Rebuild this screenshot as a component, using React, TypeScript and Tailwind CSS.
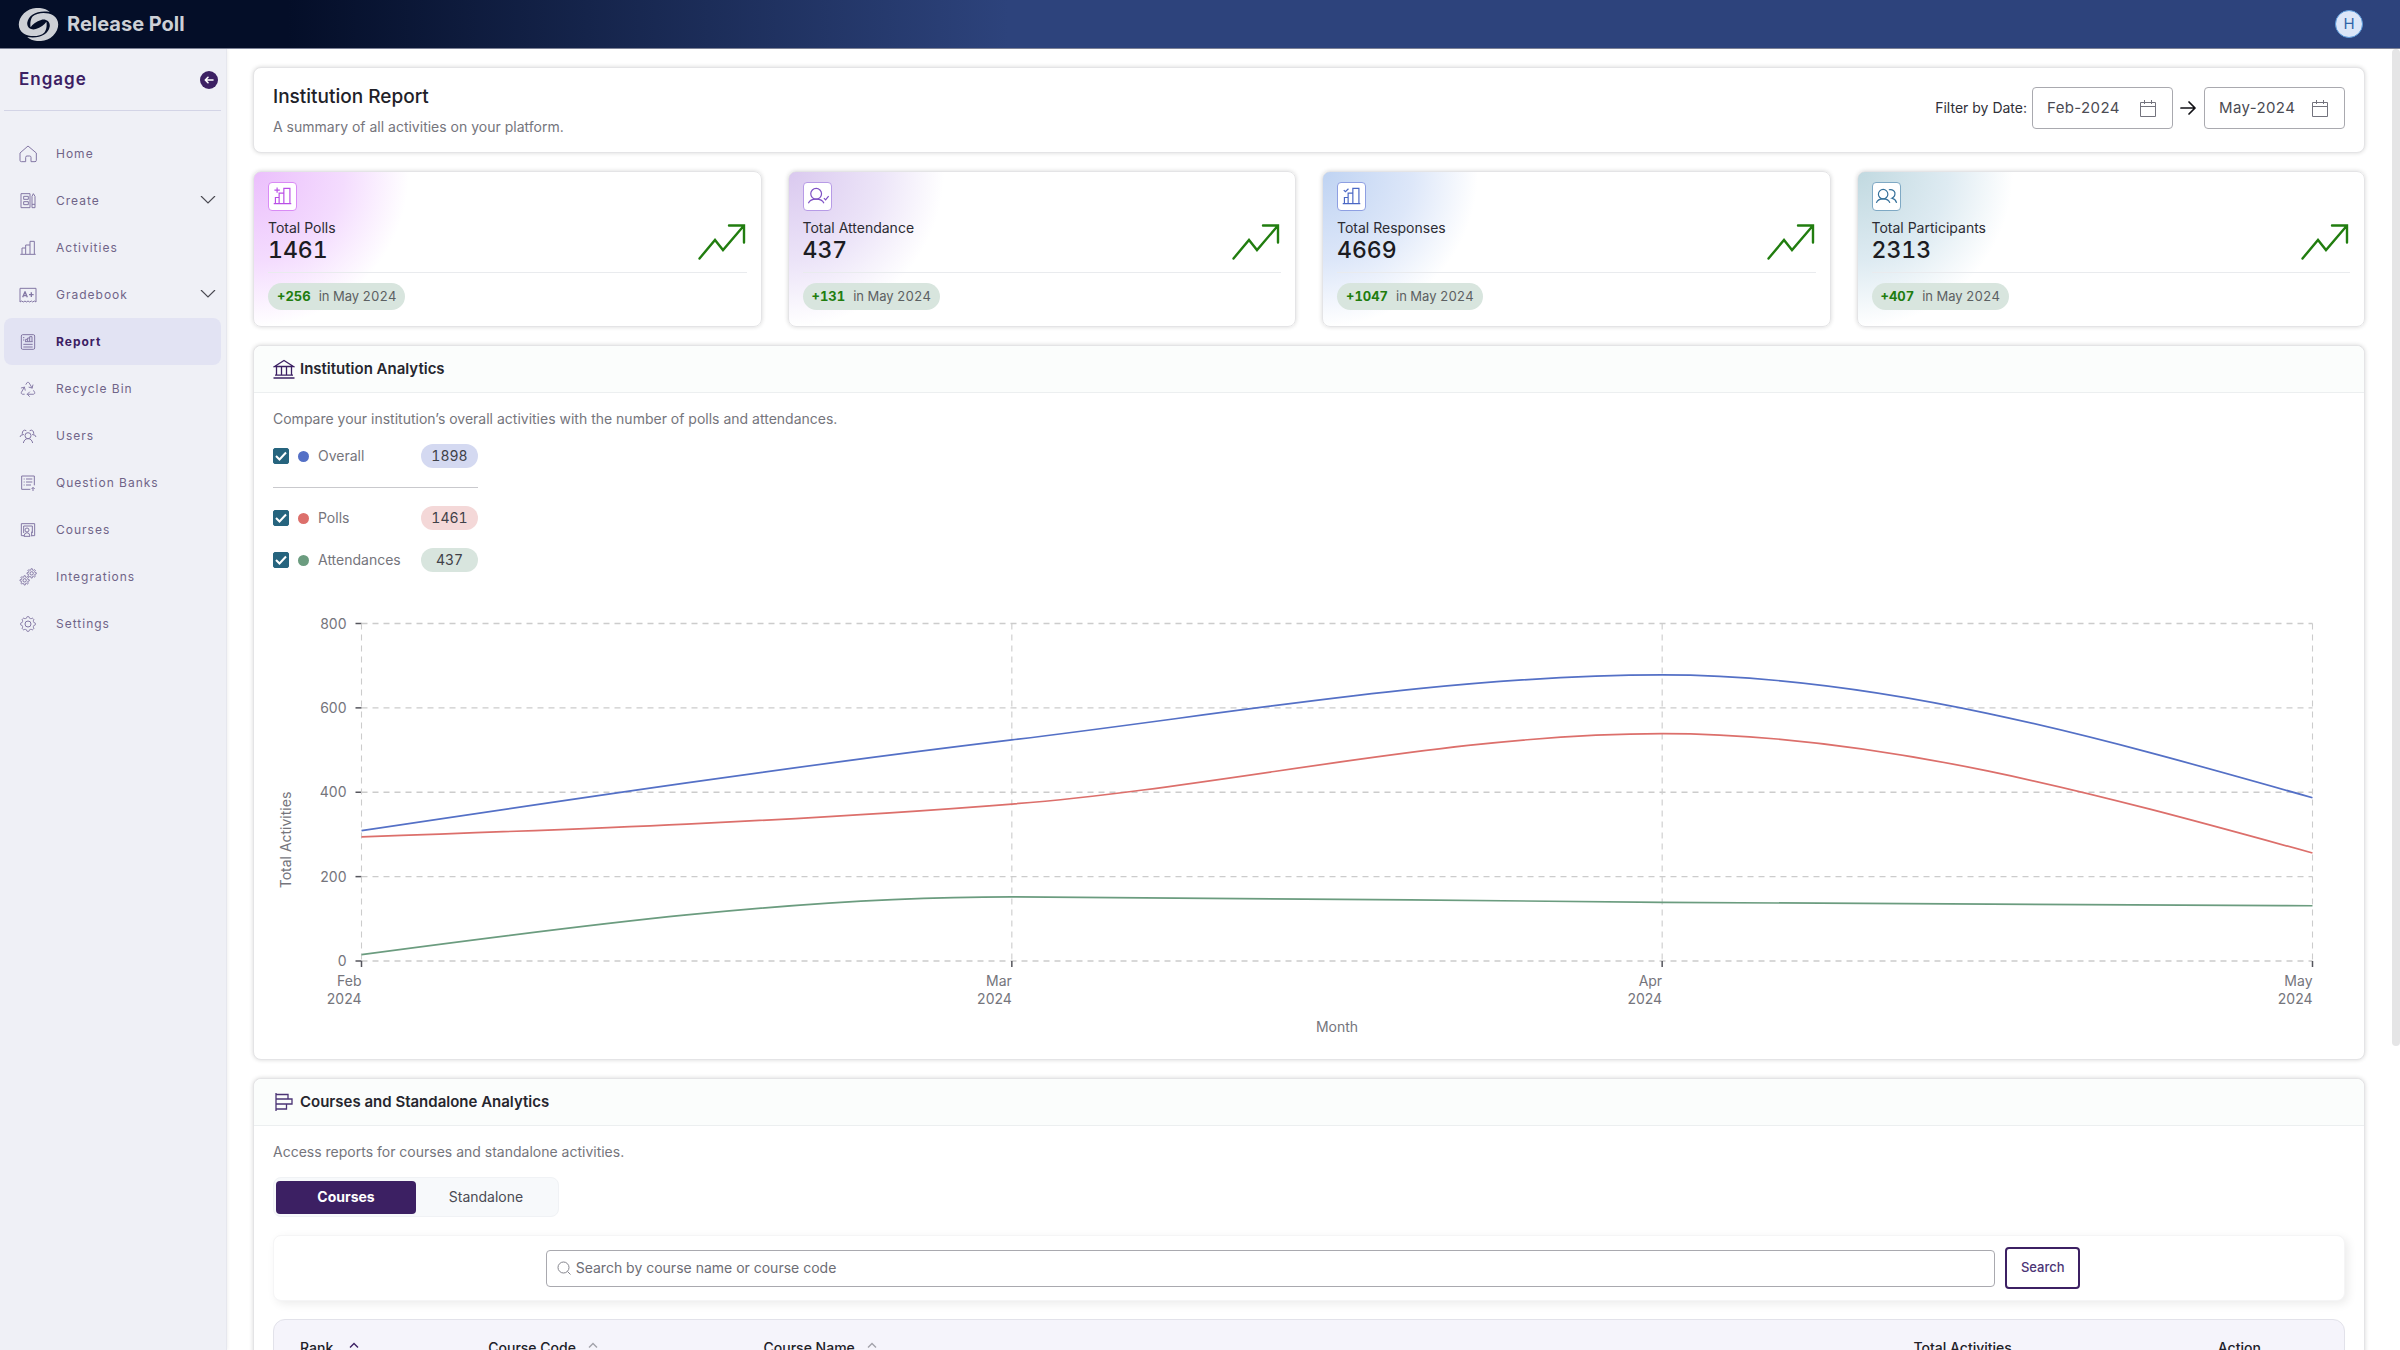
import { useLayoutEffect, useRef, useState } from "react";
import type { ReactNode } from "react";
import { Recycle } from "lucide-react";

const MONTHS = ["Feb", "Mar", "Apr", "May"];

const SERIES = [
  { id: "overall", label: "Overall", total: 1898, color: "#5470c6", dot: "bg-[#5470c6]", pill: "bg-[#d4d9f1]", values: [309, 524, 678, 387] },
  { id: "polls", label: "Polls", total: 1461, color: "#dc6f6b", dot: "bg-[#dc6f6b]", pill: "bg-[#f4d8d8]", values: [294, 372, 539, 256] },
  { id: "attendances", label: "Attendances", total: 437, color: "#6b9c7f", dot: "bg-[#6b9c7f]", pill: "bg-[#d8e5de]", values: [15, 152, 139, 131] },
];

const CARD = "rounded-lg border border-[#e4e4e6] bg-white shadow-[0_0_4px_rgba(0,0,0,0.16)]";

function gearPath(cx: number, cy: number, r: number, depth: number, teeth = 8) {
  const points: string[] = [];
  for (let i = 0; i < 96; i++) {
    const a = (i / 96) * Math.PI * 2;
    const wave = Math.max(-0.7, Math.min(0.7, Math.cos(a * teeth) * 1.3));
    const rr = r + depth * wave;
    points.push(`${(cx + rr * Math.cos(a)).toFixed(2)} ${(cy + rr * Math.sin(a)).toFixed(2)}`);
  }
  return `M${points.join("L")}Z`;
}

function NavIcon({ children }: { children: ReactNode }) {
  return (
    <svg viewBox="0 0 54 54" className="size-[18px]" fill="none" stroke="currentColor" strokeWidth="3" strokeLinejoin="round" aria-hidden="true">
      {children}
    </svg>
  );
}

const NAV = [
  { label: "Home", icon: <NavIcon><path d="M3 46V24L27 3l25 21v22q0 4-4 4H36V37q0-4-4-4h-8q-4 0-4 4v13H7q-4 0-4-4Z" /></NavIcon> },
  {
    label: "Create",
    expandable: true,
    icon: <NavIcon><path d="M33 30v17H6V5h27v25M14 13h14v9H14ZM14 29h14v9H14ZM39 13l4-8 5 8v34h-9ZM39 37h9" /></NavIcon>,
  },
  { label: "Activities", icon: <NavIcon><path d="M4 46h46M9 45V27h11v18M20 27v-9h13v27M33 18V7h13v38" /></NavIcon> },
  {
    label: "Gradebook",
    expandable: true,
    icon: (
      <NavIcon>
        <path d="M3 7h48v41l-5-3-5 3-4-3-5 3-5-3-5 3-4-3-5 3-5-3-5 3Z" />
        <path d="M11 34l7-17 7 17M14 29h9M30 26h14M37 19v14" strokeWidth="4" />
      </NavIcon>
    ),
  },
  {
    label: "Report",
    active: true,
    icon: <NavIcon><rect x="7" y="5" width="40" height="44" rx="4" /><path d="M20 26v-7h6v7M26 19v-4h6v11M32 15v-4h7v15M18 26h23M12 14h4M12 21h4M13 34h28M13 42h28" /></NavIcon>,
  },
  { label: "Recycle Bin", icon: <Recycle className="size-[18px]" strokeWidth={1.25} aria-hidden="true" /> },
  {
    label: "Users",
    icon: <NavIcon><circle cx="27" cy="26" r="9" /><path d="M13 48q3-13 14-13t14 13M14 24Q7 20 11 13q5-6 11-2M3 30q2-8 10-7M40 24q7-4 3-11-5-6-11-2M51 30q-2-8-10-7" /></NavIcon>,
  },
  {
    label: "Question Banks",
    icon: <NavIcon><path d="M46 34V6H8v40h26M14 15h3M14 24h3M14 33h3M21 15h19M21 24h19M21 33h15M42 51V41M38 45l4-5 5 5" /></NavIcon>,
  },
  {
    label: "Courses",
    icon: <NavIcon><path d="M15 44H7V8h40v36h-9M14 36V15h26v21" /><circle cx="24" cy="27" r="6" /><path d="M15 46q1-11 9-11t9 11ZM38 32v14" /></NavIcon>,
  },
  {
    label: "Integrations",
    icon: <NavIcon><path d={gearPath(17, 37, 12, 3)} /><circle cx="17" cy="37" r="5" /><path d={gearPath(38, 16, 12, 3)} /><circle cx="38" cy="16" r="5" /></NavIcon>,
  },
  { label: "Settings", icon: <NavIcon><path d={gearPath(27, 27, 20, 3)} /><circle cx="27" cy="27" r="9" /></NavIcon> },
];

const STATS = [
  {
    label: "Total Polls",
    value: "1461",
    change: "+256",
    glow: "bg-[radial-gradient(circle_at_top_left,#ebbffc_0,#f4dcfe_90px,#ffffff_155px)]",
    tint: "border-[#d98bf5] text-[#b94fe6]",
    icon: <path d="M17 64h52M22 64V46h11v18M33 46V33h14v31M47 33V19h18v45M27 16v16M19 24h16" />,
  },
  {
    label: "Total Attendance",
    value: "437",
    change: "+131",
    glow: "bg-[radial-gradient(circle_at_top_left,#dac9ef_0,#ece4f8_90px,#ffffff_155px)]",
    tint: "border-[#b79be6] text-[#7d4fc4]",
    icon: <><circle cx="39" cy="35" r="16" /><path d="M16 63q5-12 23-12t23 12M62 48l5 5 9-11" /></>,
  },
  {
    label: "Total Responses",
    value: "4669",
    change: "+1047",
    glow: "bg-[radial-gradient(circle_at_top_left,#bfd3f2_0,#dde7f9_90px,#ffffff_155px)]",
    tint: "border-[#8e9fe2] text-[#4a67c4]",
    icon: <path d="M17 64h52M22 64V46h11v18M33 46V33h14v31M47 33V19h18v45M20 24l5 5 9-9" />,
  },
  {
    label: "Total Participants",
    value: "2313",
    change: "+407",
    glow: "bg-[radial-gradient(circle_at_top_left,#c1d9e0_0,#deebf2_90px,#ffffff_155px)]",
    tint: "border-[#7fa9c4] text-[#35709a]",
    icon: <><circle cx="33" cy="36" r="14" /><path d="M13 62q4-12 20-12t20 12M50 23q14-3 18 9 1 12-9 16 11 3 14 14" /></>,
  },
];

function Logo() {
  return (
    <svg viewBox="0 0 124 100" className="h-[33px] w-[41px]" fill="#cdd0d6" aria-hidden="true">
      <path d="M96 12C80-4 40-6 18 16-4 38-2 66 18 78c16 10 48 10 62-4 6-8 8-20 6-32-6 10-18 18-32 22-14 4-28-4-26-20C32 20 60 6 96 12Z" />
      <path d="M28 88c16 16 56 18 78-4 22-22 20-50 0-62-16-10-48-10-62 4-6 8-8 20-6 32 6-10 18-18 32-22 14-4 28 4 26 20-4 24-32 38-68 32Z" />
    </svg>
  );
}

function Header() {
  return (
    <header className="flex h-[49px] shrink-0 items-center justify-between border-b border-[#7d8296] bg-[linear-gradient(90deg,#040e28_12%,#2d437c_42%)] pr-[37px] pl-[18px]">
      <a href="#" className="flex items-center gap-2 text-xl font-bold text-[#cdd0d6]">
        <Logo />
        Release Poll
      </a>
      <button className="flex size-7 items-center justify-center rounded-full border border-[#5a9bdc] bg-[#dce6f8] text-[15px] text-[#2f64a8]">
        H
      </button>
    </header>
  );
}

function Sidebar() {
  return (
    <aside className="w-[227px] shrink-0 border-r border-[#e6e7ee] bg-[#eff0f6] pr-[5px] pl-1 shadow-[1px_0_3px_rgba(0,0,0,0.06)]">
      <div className="flex h-[62px] items-center justify-between border-b border-[#d3d4e6] pr-[3px] pl-[15px]">
        <h2 className="text-[17px] font-semibold tracking-[1px] text-[#3c2063]">Engage</h2>
        <button aria-label="Collapse menu" className="flex size-[18px] items-center justify-center rounded-full bg-[#3c2063] text-white">
          <svg viewBox="0 0 18 18" className="size-[18px]" fill="none" stroke="currentColor" strokeWidth="1.6" strokeLinecap="round" strokeLinejoin="round">
            <path d="M13 9H5.500M8 6.300L5.300 9 8 11.700" />
          </svg>
        </button>
      </div>
      <nav className="mt-[19px] flex flex-col">
        {NAV.map((item) => (
          <a
            key={item.label}
            href="#"
            className={`flex h-[47px] items-center gap-[19px] rounded-lg pr-[5px] pl-[15px] text-xs tracking-[1px] ${
              item.active ? "bg-[#e2e3f3] font-bold text-[#3c2063]" : "text-[#706488]"
            }`}
          >
            <span className="text-[#8377a4]">{item.icon}</span>
            <span className="flex-1">{item.label}</span>
            {item.expandable && (
              <svg viewBox="0 0 16 9" className="h-[9px] w-4" fill="none" stroke="#4a4a52" strokeWidth="1.2" aria-hidden="true">
                <path d="M1 0l7 7 7-7" />
              </svg>
            )}
          </a>
        ))}
      </nav>
    </aside>
  );
}

function MonthField({ id, label, value }: { id: string; label: string; value: string }) {
  return (
    <div className="flex h-[42px] w-[141px] items-center rounded border border-[#a9a9af] pr-4 pl-3.5">
      <input
        id={id}
        aria-label={label}
        defaultValue={value}
        className="w-0 flex-1 bg-transparent text-[15px] tracking-wide text-[#4b4b53] outline-none"
      />
      <svg viewBox="0 0 16 17" className="h-[17px] w-4" fill="none" stroke="#73737d" aria-hidden="true">
        <path d="M.500 2.500h15v14H.500ZM.500 6.500h15M4.500 0v4M11.500 0v4" />
      </svg>
    </div>
  );
}

function ReportHeader() {
  return (
    <section className={`${CARD} flex items-start justify-between px-[19px] pt-[15px] pb-[15px]`}>
      <div>
        <h1 className="text-[19px] leading-7 font-medium text-[#212128]">Institution Report</h1>
        <p className="mt-1.5 text-sm text-[#75757c]">A summary of all activities on your platform.</p>
      </div>
      <div className="flex items-center gap-[5px] pt-1">
        <label htmlFor="from" className="text-sm text-[#303038]">Filter by Date:</label>
        <MonthField id="from" label="From month" value="Feb-2024" />
        <svg viewBox="0 0 21 16" className="h-4 w-[21px]" fill="none" stroke="#111116" strokeWidth="1.7" strokeLinecap="round" strokeLinejoin="round" aria-hidden="true">
          <path d="M3 8h14M11 2l6 6-6 6" />
        </svg>
        <MonthField id="to" label="To month" value="May-2024" />
      </div>
    </section>
  );
}

function StatCard({ stat }: { stat: (typeof STATS)[number] }) {
  return (
    <section className={`rounded-lg border border-[#e4e4e6] px-3.5 pt-2.5 pb-4 shadow-[0_0_4px_rgba(0,0,0,0.16)] ${stat.glow}`}>
      <div className="flex items-end justify-between border-b border-[#e9ebee] pb-[9px]">
        <div>
          <div className={`flex size-[29px] items-center justify-center rounded border bg-white ${stat.tint}`}>
            <svg viewBox="0 0 86 86" className="size-[29px] shrink-0" fill="none" stroke="currentColor" strokeWidth="3.500" aria-hidden="true">
              {stat.icon}
            </svg>
          </div>
          <h3 className="mt-[7px] text-sm text-[#2c2c33]">{stat.label}</h3>
          <p className="text-[23px] leading-[25px] font-medium text-[#1c1c22] tabular-nums">{stat.value}</p>
        </div>
        <svg viewBox="0 0 48 37" className="mr-px mb-[3px] h-[37px] w-12" fill="none" stroke="#217d0f" strokeWidth="2.400" strokeLinecap="round" aria-hidden="true">
          <path d="M1.500 35.500L17 17l8 10L46 2.500M31 2.500h15v17" />
        </svg>
      </div>
      <p className="mt-2.5 flex h-[27px] w-fit items-center gap-2 rounded-full bg-[#d8e5de] px-[9px] text-[13px] text-[#5c6062] tabular-nums">
        <strong className="font-bold text-[#217d0f]">{stat.change}</strong>
        in May 2024
      </p>
    </section>
  );
}

// Cubic path through the points that never overshoots them.
function monotonePath(points: [number, number][]) {
  const n = points.length;
  const slopes = points.slice(1).map(([x, y], i) => (y - points[i][1]) / (x - points[i][0]));
  const tangents = points.map((_, i) => {
    if (i === 0 || i === n - 1) return 0;
    const a = slopes[i - 1];
    const b = slopes[i];
    if (a * b <= 0) return 0;
    return Math.sign(a) * Math.min(Math.abs(a), Math.abs(b), Math.abs(a + b) / 4) * 2;
  });
  tangents[0] = (3 * slopes[0] - tangents[1]) / 2;
  tangents[n - 1] = (3 * slopes[n - 2] - tangents[n - 2]) / 2;

  let d = `M${points[0][0]} ${points[0][1]}`;
  for (let i = 1; i < n; i++) {
    const [x0, y0] = points[i - 1];
    const [x1, y1] = points[i];
    const dx = (x1 - x0) / 3;
    d += `C${x0 + dx} ${y0 + dx * tangents[i - 1]} ${x1 - dx} ${y1 - dx * tangents[i]} ${x1} ${y1}`;
  }
  return d;
}

function ActivityChart({ visible }: { visible: Record<string, boolean> }) {
  const ref = useRef<HTMLDivElement>(null);
  const [width, setWidth] = useState(2072);

  useLayoutEffect(() => {
    const el = ref.current;
    if (!el) return;
    const update = () => setWidth(el.clientWidth);
    update();
    const observer = new ResizeObserver(update);
    observer.observe(el);
    return () => observer.disconnect();
  }, []);

  const left = 88.5;
  const right = width - 32.5;
  const top = 23.5;
  const bottom = 361;
  const xAt = (i: number) => left + ((right - left) * i) / (MONTHS.length - 1);
  const yAt = (v: number) => bottom - ((bottom - top) * v) / 800;

  return (
    <div ref={ref} className="mt-7">
      <svg width={width} height="440" className="block text-sm" fill="#75757c">
        {[0, 200, 400, 600, 800].map((v) => (
          <g key={v}>
            <line x1={left} x2={right} y1={yAt(v)} y2={yAt(v)} stroke="#cccccc" strokeWidth="1.300" strokeDasharray="6 5" />
            <line x1={left - 6} x2={left} y1={yAt(v)} y2={yAt(v)} stroke="#55555c" strokeWidth="1.500" />
            <text x={left - 15} y={yAt(v) + 5} textAnchor="end">{v}</text>
          </g>
        ))}
        {MONTHS.map((month, i) => (
          <g key={month}>
            <line x1={xAt(i)} x2={xAt(i)} y1={top} y2={bottom} stroke="#cccccc" strokeWidth="1.100" strokeDasharray="6 5" />
            <line x1={xAt(i)} x2={xAt(i)} y1={bottom} y2={bottom + 6} stroke="#55555c" strokeWidth="1.500" />
            <text x={xAt(i)} y="386" textAnchor="end">{month}</text>
            <text x={xAt(i)} y="404" textAnchor="end">2024</text>
          </g>
        ))}
        {SERIES.filter((s) => visible[s.id]).map((s) => (
          <path
            key={s.id}
            d={monotonePath(s.values.map((v, i) => [xAt(i), yAt(v)]))}
            fill="none"
            stroke={s.color}
            strokeWidth="1.700"
          />
        ))}
        <text transform="translate(18 240) rotate(-90)" textAnchor="middle">Total Activities</text>
        <text x={(left + right) / 2} y="432" textAnchor="middle">Month</text>
      </svg>
    </div>
  );
}

function SectionTitle({ icon, children }: { icon: ReactNode; children: ReactNode }) {
  return (
    <div className="flex h-[47px] items-center gap-[5px] rounded-t-lg border-b border-[#eceff0] bg-[#fbfdfc] px-[19px]">
      {icon}
      <h2 className="text-[15px] font-semibold text-[#26262e]">{children}</h2>
    </div>
  );
}

function InstitutionAnalytics() {
  const [visible, setVisible] = useState<Record<string, boolean>>({ overall: true, polls: true, attendances: true });

  return (
    <section className={CARD}>
      <SectionTitle
        icon={
          <svg viewBox="0 0 22 20" className="h-5 w-[22px]" fill="none" stroke="#3c2063" strokeWidth="1.300" aria-hidden="true">
            <path d="M1.500 7.500L11 1.500l9.500 6ZM3.500 8v8M8.500 8v8M13.500 8v8M18.500 8v8M2 16.200h18M.500 19h21" />
          </svg>
        }
      >
        Institution Analytics
      </SectionTitle>
      <div className="px-[19px] pt-4 pb-[19px]">
        <p className="text-sm text-[#75757c]">
          Compare your institution’s overall activities with the number of polls and attendances.
        </p>
        <div className="mt-[15px] flex w-[205px] flex-col gap-[18px]">
          {SERIES.map((s) => (
            <div
              key={s.id}
              className={`flex items-center ${s.id === "overall" ? "border-b border-[#c9c9cd] pb-[19px]" : ""}`}
            >
              <span className="relative flex">
                <input
                  id={s.id}
                  type="checkbox"
                  checked={visible[s.id]}
                  onChange={(e) => setVisible((prev) => ({ ...prev, [s.id]: e.target.checked }))}
                  className="peer size-4 appearance-none rounded-xs border border-[#26647e] checked:bg-[#26647e]"
                />
                <svg viewBox="0 0 16 16" className="pointer-events-none absolute inset-0 hidden size-4 peer-checked:block" fill="none" stroke="#ffffff" strokeWidth="2" aria-hidden="true">
                  <path d="M3 8l3.500 3.500L13 4.500" />
                </svg>
              </span>
              <span className={`ml-[9px] size-[11px] rounded-full ${s.dot}`} />
              <label htmlFor={s.id} className="ml-[9px] flex-1 text-sm text-[#75757c]">{s.label}</label>
              <span className={`flex h-6 w-[57px] items-center justify-center rounded-full text-sm text-[#3f4148] tabular-nums ${s.pill}`}>
                {s.total}
              </span>
            </div>
          ))}
        </div>
        <ActivityChart visible={visible} />
      </div>
    </section>
  );
}

function SortableHeading({ children, active }: { children: ReactNode; active?: boolean }) {
  return (
    <button className={`flex items-center ${active ? "gap-4" : "gap-3"}`}>
      {children}
      <svg viewBox="0 0 10 6" className={`mb-1.5 h-1.5 w-2.5 ${active ? "text-[#3c2063]" : "text-[#a2a2aa]"}`} fill="none" stroke="currentColor" strokeWidth="1.400" aria-hidden="true">
        <path d="M1 5.500l4-4 4 4" />
      </svg>
    </button>
  );
}

function CoursesAnalytics() {
  const [tab, setTab] = useState("Courses");

  return (
    <section className={CARD}>
      <SectionTitle
        icon={
          <svg viewBox="0 0 22 20" className="h-5 w-[22px]" fill="none" stroke="#4b3475" strokeWidth="1.300" aria-hidden="true">
            <path d="M3 1v18M3 2.500h12v4.500M3 7h16v5H3M13.500 12v5H3" />
          </svg>
        }
      >
        Courses and Standalone Analytics
      </SectionTitle>
      <div className="px-[19px] pt-4">
        <p className="text-sm text-[#75757c]">Access reports for courses and standalone activities.</p>
        <div className="mt-[15px] flex h-10 w-fit items-center rounded-lg border border-[#f0f2f5] bg-[#f7f9fb] px-0.5">
          {["Courses", "Standalone"].map((name) => (
            <button
              key={name}
              onClick={() => setTab(name)}
              className={`h-[33px] w-[140px] rounded text-sm ${
                tab === name ? "bg-[#3c2063] font-bold text-white" : "text-[#4b4b53]"
              }`}
            >
              {name}
            </button>
          ))}
        </div>
        <form
          onSubmit={(e) => e.preventDefault()}
          className="mt-[18px] flex h-[66px] items-center justify-center gap-2.5 rounded-lg border border-[#f5f5f6] bg-white pl-2 shadow-[3px_3px_10px_rgba(0,0,0,0.08)]"
        >
          <div className="flex h-[37px] w-[70.300%] items-center gap-[5px] rounded border border-[#a9a9af] px-2.5">
            <svg viewBox="0 0 14 14" className="size-3.5" fill="none" stroke="#85858d" aria-hidden="true">
              <circle cx="6.500" cy="6.500" r="5.500" />
              <path d="M10.500 10.500l3 3" />
            </svg>
            <input
              type="text"
              aria-label="Search by course name or course code"
              placeholder="Search by course name or course code"
              className="flex-1 bg-transparent text-sm outline-none placeholder:text-[#6d6d75]"
            />
          </div>
          <button className="h-[42px] w-[75px] rounded border-2 border-[#3c2063] text-[13px] font-medium text-[#4b3475]">Search</button>
        </form>
        <div className="mt-[18px] overflow-hidden rounded-t-xl border border-[#e2e2ea] bg-[#f5f4fb]">
          <table className="w-full table-fixed text-left text-sm text-[#212128]">
            <thead>
              <tr className="h-14">
                <th className="w-[10.350%] pl-[26px] font-medium"><SortableHeading active>Rank</SortableHeading></th>
                <th className="w-[13.300%] font-medium"><SortableHeading>Course Code</SortableHeading></th>
                <th className="font-medium"><SortableHeading>Course Name</SortableHeading></th>
                <th className="w-[14.700%] font-medium">Total Activities</th>
                <th className="w-[6.100%] font-medium">Action</th>
              </tr>
            </thead>
          </table>
        </div>
      </div>
    </section>
  );
}

export default function App() {
  return (
    <div className="flex h-screen flex-col overflow-hidden bg-white font-['Inter',sans-serif]">
      <Header />
      <div className="flex min-h-0 flex-1">
        <Sidebar />
        <main className="relative min-w-0 flex-1 overflow-hidden">
          <div className="flex flex-col gap-[18px] pt-[18px] pr-[35px] pl-[26px]">
            <ReportHeader />
            <div className="grid grid-cols-4 gap-[26px]">
              {STATS.map((stat) => (
                <StatCard key={stat.label} stat={stat} />
              ))}
            </div>
            <InstitutionAnalytics />
            <CoursesAnalytics />
          </div>
          <div className="absolute top-0 right-0 h-[997px] w-2 rounded-full bg-[#e5e5e6]" />
        </main>
      </div>
    </div>
  );
}
